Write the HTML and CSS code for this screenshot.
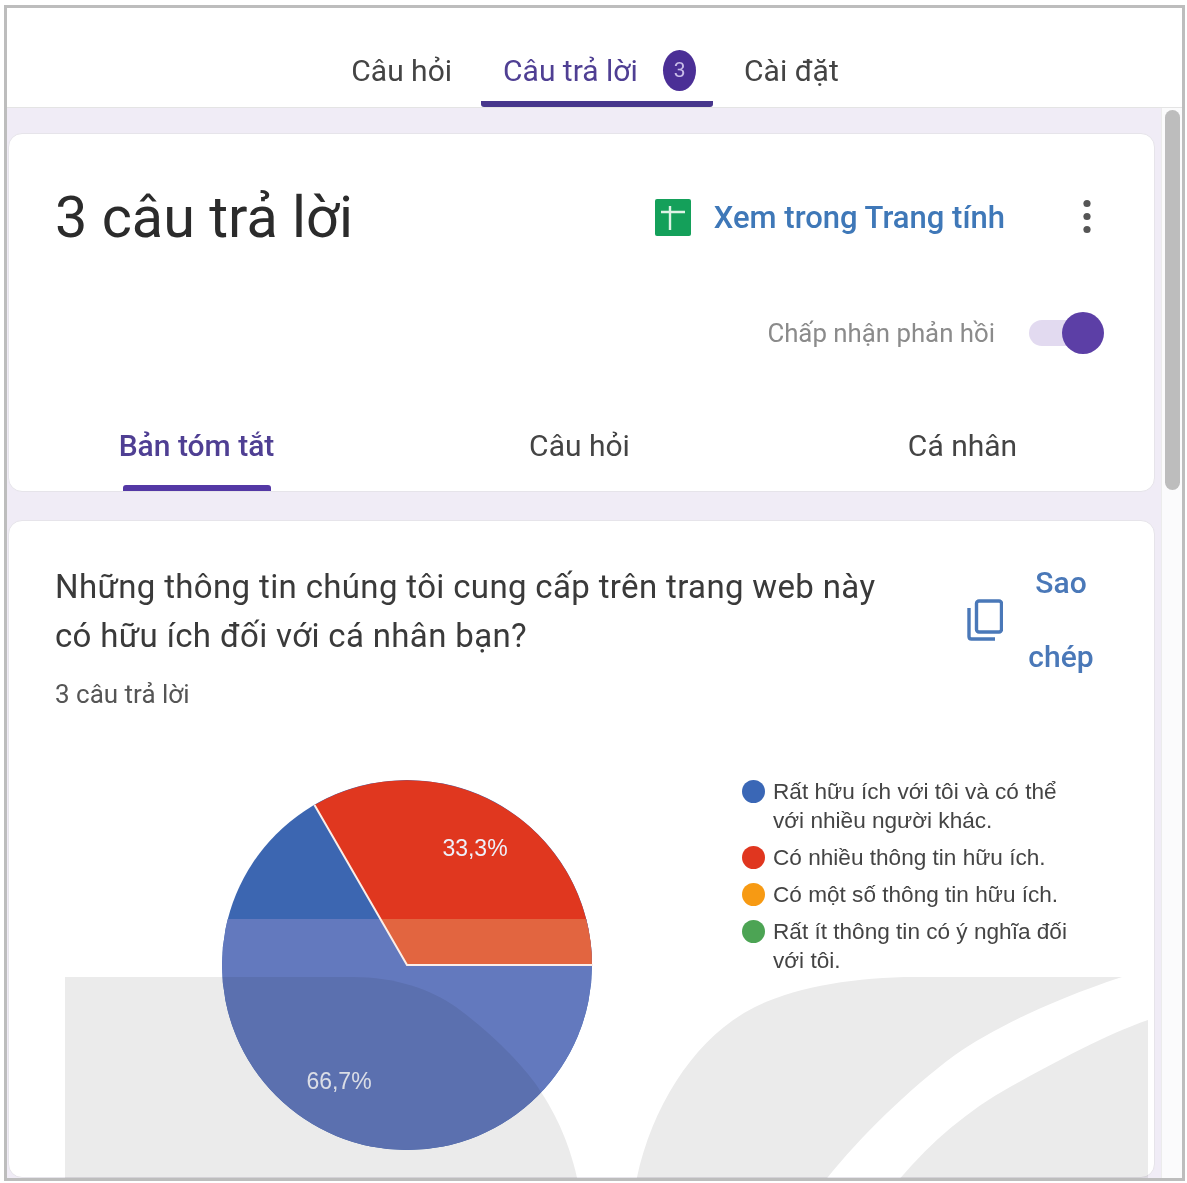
FILE: index.html
```html
<!DOCTYPE html>
<html lang="vi">
<head>
<meta charset="utf-8">
<title>Câu trả lời</title>
<link rel="stylesheet" href="styles.css">
</head>
<body>
<div class="frame">
  <nav class="top-tabs">
    <span class="top-tab">Câu hỏi</span>
    <span class="top-tab active">Câu trả lời <b class="badge">3</b></span>
    <span class="top-tab">Cài đặt</span>
  </nav>
  <div class="main">
    <div class="content">
      <section class="card summary">
        <div class="title-row">
          <h1 class="title">3 câu trả lời</h1>
          <div class="actions">
            <svg class="sheet-icon" viewBox="0 0 36 37"><rect width="36" height="37" rx="2" fill="#14a05a"/><path d="M6 13H30M15 7V31" stroke="#dff3e6" stroke-width="2.400" fill="none"/></svg>
            <span class="sheet-link">Xem trong Trang tính</span>
            <svg class="more" viewBox="0 0 10 36"><circle cx="5" cy="4.500" r="3.600" fill="#555"/><circle cx="5" cy="17.500" r="3.600" fill="#555"/><circle cx="5" cy="30.500" r="3.600" fill="#555"/></svg>
          </div>
        </div>
        <div class="accept-row">
          <span class="accept-label">Chấp nhận phản hồi</span>
          <span class="toggle"><i class="knob"></i></span>
        </div>
        <div class="sub-tabs">
          <span class="sub-tab active">Bản tóm tắt</span>
          <span class="sub-tab">Câu hỏi</span>
          <span class="sub-tab">Cá nhân</span>
        </div>
      </section>
      <section class="card question">
        <svg class="watermark" viewBox="0 0 1090 210">
          <path d="M0 0H288C330 0 365 12 391 30C425 55 450 80 470 106C490 135 505 165 514 210H0Z" fill="#ebebeb"/>
          <path d="M570 210C585 130 630 60 690 30C730 10 790 0 850 0H1057C990 22 930 50 890 78C840 115 790 165 755 210Z" fill="#ebebeb"/>
          <path d="M828 210C860 170 900 135 945 110C990 85 1040 58 1083 43V210Z" fill="#ebebeb"/>
        </svg>
        <div class="q-head">
          <div>
            <h2 class="q-title">Những thông tin chúng tôi cung cấp trên trang web này có hữu ích đối với cá nhân bạn?</h2>
            <p class="q-count">3 câu trả lời</p>
          </div>
          <div class="copy">
            <svg class="copy-icon" viewBox="0 0 36 42" fill="none" stroke="#4a78b8" stroke-width="3.400"><rect x="9.500" y="2" width="25" height="31" rx="2.500"/><path d="M2 9V37.500C2 39 3 40 4.500 40H28"/></svg>
            <span class="copy-text">Sao chép</span>
          </div>
        </div>
        <div class="chart-row">
          <svg class="pie" viewBox="0 0 372 372" role="img">
            <defs><clipPath id="band"><rect x="0" y="140" width="372" height="232"/></clipPath></defs>
            <circle cx="186" cy="186" r="185" fill="#3c66b1"/>
            <path d="M186 186L93.500 26A185 185 0 0 1 371 186Z" fill="#e0371f"/>
            <g clip-path="url(#band)">
              <circle cx="186" cy="186" r="185" fill="#6379be"/>
              <path d="M186 186L93.500 26A185 185 0 0 1 371 186Z" fill="#e26540"/>
            </g>
            <path d="M93.500 26L186 186H372" fill="none" stroke="#fbeee8" stroke-width="2"/>
            <text x="254" y="77" class="pct" text-anchor="middle">33,3%</text>
            <text x="118" y="310" class="pct" text-anchor="middle">66,7%</text>
          </svg>
          <ul class="legend">
            <li><i class="dot blue"></i>Rất hữu ích với tôi và có thể với nhiều người khác.</li>
            <li><i class="dot red"></i>Có nhiều thông tin hữu ích.</li>
            <li><i class="dot orange"></i>Có một số thông tin hữu ích.</li>
            <li><i class="dot green"></i>Rất ít thông tin có ý nghĩa đối với tôi.</li>
          </ul>
        </div>
      </section>
    </div>
    <div class="scroll"><div class="thumb"></div></div>
  </div>
</div>
</body>
</html>
```

FILE: styles.css
```css
* { box-sizing: border-box; }
html, body { margin: 0; height: 1183px; overflow: hidden; background: #fff; }
body { font-family: Roboto, "Noto Sans", sans-serif; color: #3c3c3c; padding: 5px 2px 2px 4px; }
.frame {
  width: 1181px; height: 1176px; border: 3px solid #bdbdbd;
  display: flex; flex-direction: column; overflow: hidden; background: #fff;
  filter: blur(.6px);
}
.top-tabs { height: 99px; flex: none; display: flex; justify-content: center; padding-left: 2px; background: #fff; }
.top-tab { font-size: 30px; color: #444; padding: 0 31px 0 30px; line-height: 126px; height: 99px; white-space: nowrap; }
.top-tab:first-child { padding-right: 29px; }
.top-tab:last-child { padding-left: 31px; }
.top-tab.active { color: #4f3f93; padding: 0 0 0 22px; width: 232px; border-bottom: 6px solid #47368c; border-radius: 0 0 3px 3px; }
.badge { display: inline-block; width: 33px; height: 41px; line-height: 41px; border-radius: 50%; background: #4b2f96; color: #c9bde8; font-size: 21px; font-weight: 400; text-align: center; margin-left: 18px; vertical-align: 4px; }
.main { flex: 1; min-height: 0; display: flex; background: #f0ecf6; border-top: 1px solid #e4e4e4; }
.content { flex: 1; min-width: 0; padding: 25px 6px 0 1px; display: flex; flex-direction: column; gap: 28px; }
.card { background: #fff; border: 1px solid #e6e4ea; border-radius: 14px; }
.summary { height: 359px; flex: none; display: flex; flex-direction: column; }
.title-row { height: 76px; margin-top: 45px; display: flex; align-items: center; justify-content: space-between; padding: 0 62px 0 46px; }
.title { font-size: 57.600px; font-weight: 400; margin: 0; color: #2b2b2b; white-space: nowrap; }
.actions { display: flex; align-items: center; }
.sheet-icon { width: 36px; height: 37px; }
.sheet-link { font-size: 31px; font-weight: 500; color: #3f78b8; margin: 0 77px 0 23px; white-space: nowrap; }
.more { width: 10px; height: 36px; }
.accept-row { height: 60px; margin-top: 48px; display: flex; align-items: center; justify-content: flex-end; padding-right: 51px; }
.accept-label { font-size: 25.800px; color: #8b8b8b; margin-right: 34px; }
.toggle { width: 55px; height: 26px; border-radius: 13px; background: #e2daf0; position: relative; margin-right: 19px; }
.knob { position: absolute; left: 33px; top: -8px; width: 42px; height: 42px; border-radius: 50%; background: #5c3fa6; }
.sub-tabs { margin-top: auto; height: 90px; display: grid; grid-template-columns: repeat(3, 1fr); margin-left: -4px; }
.sub-tab { font-size: 30px; color: #444; text-align: center; line-height: 89px; position: relative; }
.sub-tab.active { color: #4f3f93; font-weight: 500; }
.sub-tab.active::after { content: ""; position: absolute; left: 50%; bottom: 0; width: 148px; height: 6px; margin-left: -74px; background: #5438a5; border-radius: 3px 3px 0 0; }
.question { flex: 1; position: relative; padding: 41px 47px 0 46px; }
.watermark { position: absolute; left: 56px; top: 456px; width: 1090px; height: 210px; mix-blend-mode: multiply; z-index: 1; }
.q-head { display: flex; justify-content: space-between; height: 215px; }
.q-title { margin: 0; width: 840px; font-size: 33px; letter-spacing: .35px; line-height: 49px; font-weight: 400; color: #3a3a3a; }
.q-count { margin: 19px 0 0; font-size: 26px; line-height: 30px; color: #555; }
.copy { display: flex; align-items: center; height: 150px; margin-top: -17px; margin-right: 12px; }
.copy-icon { width: 36px; height: 42px; margin-right: 24px; }
.copy-text { width: 68px; font-size: 30px; font-weight: 500; line-height: 74px; text-align: center; color: #4a78b8; }
.chart-row { display: flex; margin-top: 2px; padding-left: 166px; }
.pie { width: 372px; height: 372px; flex: none; }
.pct { font: 23px "Liberation Sans", sans-serif; fill: #eef1fa; }
.legend { list-style: none; margin: -2px 0 0 149px; padding: 0; width: 330px; font: 22.6px/29px "Liberation Sans", sans-serif; color: #444; }
.legend li { position: relative; padding-left: 31px; margin-bottom: 8px; }
.dot { position: absolute; left: 0; top: 3px; width: 23px; height: 23px; border-radius: 50%; }
.blue { background: #3a67b6; } .red { background: #e0361f; } .orange { background: #f79a13; } .green { background: #4ca454; }
.scroll { width: 21px; flex: none; background: #fbfbfc; border-left: 1px solid #ececec; padding: 2px 2px 0 3px; }
.thumb { height: 380px; background: #bdbdbd; border-radius: 8px; }
```
